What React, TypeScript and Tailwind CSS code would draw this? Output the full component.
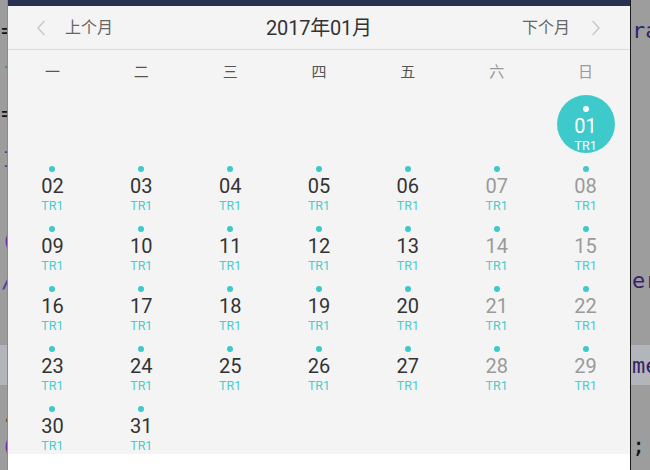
import React from "react";

type Line = { h: number; left?: string; lc?: string; right?: string; rc?: string; band?: boolean };

const lines: Line[] = [
  { h: 18 },
  { h: 24, left: "=", lc: "text-[#111]", right: "ra", rc: "text-[#36226c]" },
  { h: 12 },
  { h: 22, left: "-", lc: "text-[#3f8a92]" },
  { h: 26 },
  { h: 22, left: "=", lc: "text-[#111]" },
  { h: 19 },
  { h: 14, left: "-", lc: "text-[#5a36a4]" },
  { h: 14, left: "-", lc: "text-[#5a36a4]" },
  { h: 55 },
  { h: 28, left: "(", lc: "text-[#5a36a4]" },
  { h: 12 },
  { h: 28, left: "/", lc: "text-[#5a36a4]", right: "er", rc: "text-[#36226c]" },
  { h: 51 },
  { h: 40, right: "me", rc: "text-[#36226c]", band: true },
  { h: 25 },
  { h: 20, left: "·", lc: "text-[#6b3a10]" },
  { h: 30, left: "(", lc: "text-[#5a36a4]", right: ";", rc: "text-[#111]" },
];

const weekdays = ["一", "二", "三", "四", "五", "六", "日"];

function Chevron({ dir }: { dir: "left" | "right" }) {
  return (
    <svg width="10" height="16" viewBox="0 0 10 16" fill="none">
      <polyline
        points={dir === "left" ? "8,1.5 2,8 8,14.5" : "2,1.5 8,8 2,14.5"}
        stroke="#c9c9c9"
        strokeWidth="1.6"
        strokeLinecap="round"
        strokeLinejoin="round"
      />
    </svg>
  );
}

function Cell({ day, col }: { day: number | null; col: number }) {
  if (day === null) return <div className="h-[60px]" />;
  const selected = day === 1;
  const weekend = col >= 5;
  const num = day < 10 ? `0${day}` : `${day}`;
  return (
    <div className="relative h-[60px] flex flex-col items-center pt-[12px]">
      {selected && (
        <div className="absolute left-1/2 top-[1px] -translate-x-1/2 w-[58px] h-[58px] rounded-full bg-[#3ec9ca]" />
      )}
      <div className={`relative w-[6px] h-[6px] rounded-full ${selected ? "bg-white" : "bg-[#3ec9ca]"}`} />
      <div
        className={`relative mt-[3px] text-[20px] leading-[22px] ${
          selected ? "text-white" : weekend ? "text-[#9a9a9a]" : "text-[#333]"
        }`}
      >
        {num}
      </div>
      <div className={`relative mt-[2px] text-[12.5px] leading-[14px] ${selected ? "text-white" : "text-[#48cdcd]"}`}>
        TR1
      </div>
    </div>
  );
}

export default function App() {
  const cells: (number | null)[] = [null, null, null, null, null, null];
  for (let d = 1; d <= 31; d++) cells.push(d);
  while (cells.length < 42) cells.push(null);
  const rows: (number | null)[][] = [];
  for (let i = 0; i < 6; i++) rows.push(cells.slice(i * 7, i * 7 + 7));

  return (
    <div
      className="relative w-[650px] h-[470px] overflow-hidden bg-[#9d9d9d]"
      style={{ fontFamily: "Roboto, 'Noto Sans CJK SC', sans-serif" }}
    >
      {/* dimmed editor behind */}
      <div className="flex flex-col" style={{ fontFamily: "'DejaVu Sans Mono', monospace" }}>
        {lines.map((l, i) => (
          <div
            key={i}
            className={`flex items-center whitespace-nowrap text-[22px] ${l.band ? "bg-[#b2b5b9]" : ""}`}
            style={{ height: l.h }}
          >
            <span className={`w-[632px] shrink-0 pl-[1px] ${l.lc ?? ""}`}>{l.left ?? ""}</span>
            <span className={l.rc ?? ""}>{l.right ?? ""}</span>
          </div>
        ))}
      </div>

      {/* calendar popup */}
      <div className="absolute left-[7px] top-0 w-[624px] h-[470px] bg-white border-l border-l-[#8a8a8a] border-r border-r-[#1c1c1c] flex flex-col">
        <div className="h-[6px] bg-[#283150]" />
        <div className="h-[44px] bg-[#f4f4f4] border-b border-[#dcdcdc] grid grid-cols-[1fr_auto_1fr] items-center">
          <div className="flex items-center pl-[28px] gap-[19px]">
            <Chevron dir="left" />
            <span className="text-[16px] text-[#666]">上个月</span>
          </div>
          <div className="text-[20px] text-[#333] tracking-[-0.2px]">2017年01月</div>
          <div className="flex items-center justify-end pr-[29px] gap-[21px]">
            <span className="text-[16px] text-[#666]">下个月</span>
            <Chevron dir="right" />
          </div>
        </div>
        <div className="bg-[#f4f4f4] flex flex-col">
          <div className="h-[44px] grid grid-cols-7 items-center text-center text-[15px] pt-[1px]">
            {weekdays.map((w, i) => (
              <div key={w} className={i >= 5 ? "text-[#999]" : "text-[#555]"}>
                {w}
              </div>
            ))}
          </div>
          {rows.map((r, ri) => (
            <div key={ri} className="grid grid-cols-7">
              {r.map((d, ci) => (
                <Cell key={ci} day={d} col={ci} />
              ))}
            </div>
          ))}
        </div>
        <div className="flex-1 bg-white" />
      </div>
    </div>
  );
}
